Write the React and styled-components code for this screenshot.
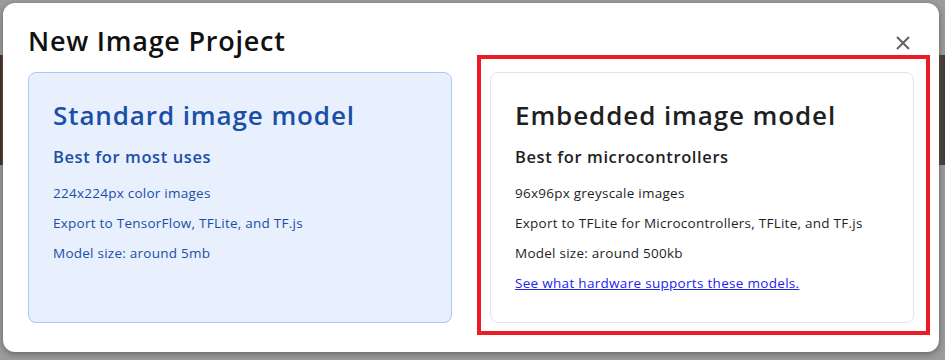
import React from "react";
import styled, { createGlobalStyle } from "styled-components";

const GlobalStyle = createGlobalStyle`
  html, body {
    margin: 0;
    padding: 0;
    background: #9b9b9b;
    font-family: "Open Sans", Roboto, Arial, sans-serif;
  }
`;

const Page = styled.div`
  position: relative;
  width: 945px;
  height: 360px;
  overflow: hidden;
  background: #9b9b9b;
  padding-top: 55px;
  box-sizing: border-box;
`;

const Backdrop = styled.div`
  height: 110px;
  background: linear-gradient(90deg, #3a2a22 0px, #6a4e42 3px, #9b9b9b 3px, #9b9b9b 939px, #5c5048 939px, #3d3b35 945px);
`;

const Dialog = styled.div`
  position: absolute;
  top: 3px;
  left: 3px;
  width: 936px;
  height: 349px;
  box-sizing: border-box;
  background: #ffffff;
  border-radius: 12px;
  box-shadow: 0 2px 6px rgba(0, 0, 0, 0.35);
  padding: 19px 25px 29px 25px;
  display: flex;
  flex-direction: column;
`;

const Header = styled.div`
  display: flex;
  align-items: center;
  justify-content: space-between;
  height: 36px;
  margin-bottom: 14px;
`;

const Title = styled.h1`
  margin: 0;
  font-size: 27px;
  font-weight: 600;
  color: #111111;
  letter-spacing: 0.75px;
`;

const CloseButton = styled.button`
  border: none;
  background: none;
  padding: 0;
  width: 20px;
  height: 20px;
  margin-right: 1px;
  margin-top: 6px;
  display: flex;
  align-items: center;
  justify-content: center;
  cursor: pointer;
`;

const Options = styled.div`
  flex: 1;
  display: grid;
  grid-template-columns: 424px 424px;
  column-gap: 38px;
`;

const Slot = styled.div`
  position: relative;
  display: flex;
`;

const Card = styled.div`
  flex: 1;
  box-sizing: border-box;
  border-radius: 8px;
  padding: 25px 24px 0 24px;
  border: 1.5px solid ${(p) => (p.$selected ? "#a8c7fa" : "#e3e3e8")};
  background: ${(p) => (p.$selected ? "#e8f0fe" : "#ffffff")};
  color: ${(p) => (p.$selected ? "#1a4fa5" : "#1f1f1f")};
`;

const CardTitle = styled.h2`
  margin: 0 0 13px;
  font-size: 26px;
  line-height: 34px;
  font-weight: 600;
  letter-spacing: 0.9px;
`;

const CardSubtitle = styled.h3`
  margin: 0 0 9px;
  font-size: 16.5px;
  line-height: 24px;
  font-weight: 600;
  letter-spacing: 0.6px;
`;

const Line = styled.p`
  margin: 0;
  font-size: 13.5px;
  line-height: 30px;
  letter-spacing: 0.25px;
`;

const Link = styled.a`
  font-size: 13.5px;
  line-height: 30px;
  letter-spacing: 0.3px;
  color: #2424ee;
  text-decoration: underline;
`;

const Highlight = styled.div`
  position: absolute;
  top: -17px;
  left: -13px;
  right: -16px;
  bottom: -12px;
  border: 4px solid #ed1c24;
  pointer-events: none;
`;

const options = [
  {
    title: "Standard image model",
    subtitle: "Best for most uses",
    lines: [
      "224x224px color images",
      "Export to TensorFlow, TFLite, and TF.js",
      "Model size: around 5mb",
    ],
    selected: true,
  },
  {
    title: "Embedded image model",
    subtitle: "Best for microcontrollers",
    lines: [
      "96x96px greyscale images",
      "Export to TFLite for Microcontrollers, TFLite, and TF.js",
      "Model size: around 500kb",
    ],
    link: "See what hardware supports these models.",
    highlighted: true,
  },
];

export default function App() {
  return (
    <Page>
      <GlobalStyle />
      <Backdrop />
      <Dialog>
        <Header>
          <Title>New Image Project</Title>
          <CloseButton aria-label="Close">
            <svg width="14" height="14" viewBox="0 0 14 14">
              <path d="M1 1L13 13M13 1L1 13" stroke="#5f6368" strokeWidth="2" />
            </svg>
          </CloseButton>
        </Header>
        <Options>
          {options.map((o) => (
            <Slot key={o.title}>
              <Card $selected={o.selected}>
                <CardTitle>{o.title}</CardTitle>
                <CardSubtitle>{o.subtitle}</CardSubtitle>
                {o.lines.map((l) => (
                  <Line key={l}>{l}</Line>
                ))}
                {o.link && <Link href="#">{o.link}</Link>}
              </Card>
              {o.highlighted && <Highlight />}
            </Slot>
          ))}
        </Options>
      </Dialog>
    </Page>
  );
}
